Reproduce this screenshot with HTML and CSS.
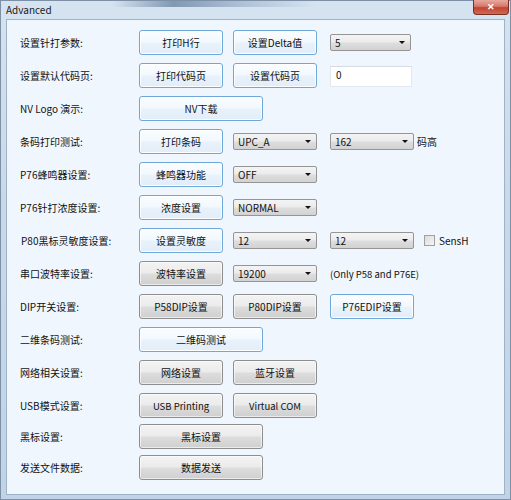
FILE: index.html
```html
<!DOCTYPE html>
<html lang="zh-CN">
<head>
    <meta charset="UTF-8">
    <title>Advanced</title>
    <link rel="stylesheet" href="styles.css">
</head>
<body>
    <div class="window">
        <div class="titlebar">
            <span class="title">Advanced</span>
            <span class="close">✕</span>
        </div>
        <div class="client">
            <div class="row">
                <span class="label">设置针打参数:</span>
                <button class="btn hot">打印H行</button>
                <button class="btn hot">设置Delta值</button>
                <div class="combo col3 short">5</div>
            </div>
            <div class="row">
                <span class="label">设置默认代码页:</span>
                <button class="btn hot">打印代码页</button>
                <button class="btn hot">设置代码页</button>
                <div class="edit col3">0</div>
            </div>
            <div class="row">
                <span class="label">NV Logo 演示:</span>
                <button class="btn hot wide">NV下载</button>
            </div>
            <div class="row">
                <span class="label">条码打印测试:</span>
                <button class="btn hot">打印条码</button>
                <div class="combo">UPC_A</div>
                <div class="combo col3">162</div>
                <span class="note">码高</span>
            </div>
            <div class="row">
                <span class="label">P76蜂鸣器设置:</span>
                <button class="btn hot">蜂鸣器功能</button>
                <div class="combo">OFF</div>
            </div>
            <div class="row">
                <span class="label">P76针打浓度设置:</span>
                <button class="btn hot">浓度设置</button>
                <div class="combo">NORMAL</div>
            </div>
            <div class="row">
                <span class="label indent">P80黑标灵敏度设置:</span>
                <button class="btn hot">设置灵敏度</button>
                <div class="combo">12</div>
                <div class="combo col3">12</div>
                <label class="check"><span class="box"></span>SensH</label>
            </div>
            <div class="row">
                <span class="label">串口波特率设置:</span>
                <button class="btn">波特率设置</button>
                <div class="combo">19200</div>
                <span class="col3 small">(Only P58 and P76E)</span>
            </div>
            <div class="row">
                <span class="label">DIP开关设置:</span>
                <button class="btn">P58DIP设置</button>
                <button class="btn">P80DIP设置</button>
                <button class="btn hot col3">P76EDIP设置</button>
            </div>
            <div class="row">
                <span class="label">二维条码测试:</span>
                <button class="btn hot wide">二维码测试</button>
            </div>
            <div class="row">
                <span class="label">网络相关设置:</span>
                <button class="btn">网络设置</button>
                <button class="btn">蓝牙设置</button>
            </div>
            <div class="row">
                <span class="label">USB模式设置:</span>
                <button class="btn small">USB Printing</button>
                <button class="btn small">Virtual COM</button>
            </div>
            <div class="row tight">
                <span class="label">黑标设置:</span>
                <button class="btn wide">黑标设置</button>
            </div>
            <div class="row tight">
                <span class="label">发送文件数据:</span>
                <button class="btn wide">数据发送</button>
            </div>
        </div>
    </div>
</body>
</html>
```

FILE: styles.css
```css
body {
    margin: 0;
    font-family: "Noto Sans CJK SC", sans-serif;
    font-size: 10px;
    color: #111;
}
.window {
    width: 511px;
    height: 500px;
    box-sizing: border-box;
    padding: 0 6px 5px 6px;
    display: flex;
    flex-direction: column;
    background: linear-gradient(100deg, rgba(255,255,255,0) 22%, rgba(60,90,130,0.55) 34%, rgba(90,120,160,0.3) 48%, rgba(255,255,255,0) 62%) top / 100% 7px no-repeat,
                linear-gradient(180deg, #d6e3f0 0%, #c8d9ea 40%, #c0d3e7 100%);
    box-shadow: inset 0 0 0 1px #7d90a6;
}
.titlebar {
    height: 19px;
    display: flex;
    justify-content: space-between;
    align-items: flex-start;
}
.title {
    padding-top: 3px;
    line-height: 14px;
    font-size: 10px;
    color: #1b1b1b;
}
.close {
    width: 36px;
    height: 15px;
    margin-right: -4px;
    box-sizing: border-box;
    border: 1px solid #7b2e26;
    border-top: none;
    border-radius: 0 0 4px 4px;
    background: linear-gradient(#e8a99f 0%, #d7786b 45%, #c24433 55%, #cf6a52 100%);
    color: #fff;
    font-size: 9px;
    font-weight: bold;
    line-height: 14px;
    text-align: center;
}
.client {
    flex: 1;
    border: 1px solid #9fb2c6;
    background: #eff6fd;
    padding: 10px 0 0 13px;
    display: flex;
    flex-direction: column;
    gap: 8px;
}
.row {
    height: 25px;
    display: flex;
    align-items: center;
}
.row.tight {
    margin-top: -2px;
}
.label {
    width: 119px;
    flex: none;
}
.label.indent {
    padding-left: 1px;
    width: 118px;
}
.small {
    font-size: 9.5px;
}
.btn {
    width: 84px;
    height: 25px;
    margin: 0 10px 0 0;
    padding: 0;
    flex: none;
    font-family: inherit;
    font-size: 10px;
    color: #111;
    border: 1px solid #8e8e8e;
    border-radius: 3px;
    background: linear-gradient(#f3f3f3 0%, #ebebeb 48%, #dddddd 52%, #cfcfcf 100%);
    box-shadow: inset 0 0 0 1px rgba(255,255,255,0.6);
}
.btn.small {
    font-size: 9.5px;
}
.btn.hot {
    border-color: #6ea7da;
    background: linear-gradient(#fafdff 0%, #f2f8fe 48%, #e9f2fb 52%, #e1edf9 100%);
    box-shadow: inset 0 0 0 1px rgba(255,255,255,0.9);
}
.btn.wide {
    width: 124px;
}
.combo {
    position: relative;
    width: 84px;
    height: 17px;
    margin-right: 10px;
    box-sizing: border-box;
    flex: none;
    padding-left: 4px;
    line-height: 15px;
    border: 1px solid #959595;
    border-radius: 2px;
    background: linear-gradient(#f4f4f4 0%, #ebebeb 48%, #dedede 52%, #d2d2d2 100%);
}
.combo.short {
    width: 81px;
}
.combo::after {
    content: "";
    position: absolute;
    right: 5px;
    top: 6px;
    border-top: 3px solid #111;
    border-left: 3px solid transparent;
    border-right: 3px solid transparent;
}
.col3 {
    margin-left: 3px;
}
.edit {
    width: 82px;
    height: 21px;
    box-sizing: border-box;
    padding: 2px 0 0 5px;
    background: #fff;
    border: 1px solid #e2e8ef;
    border-top-color: #d4dbe3;
    align-self: flex-start;
    margin-top: 3px;
    line-height: 12px;
}
.note {
    margin-left: -7px;
}
.check {
    display: flex;
    align-items: center;
    gap: 4px;
}
.check .box {
    width: 9px;
    height: 9px;
    border: 1px solid #a0a0a0;
    background: linear-gradient(135deg, #dcdcdc, #f5f5f5);
}
```
